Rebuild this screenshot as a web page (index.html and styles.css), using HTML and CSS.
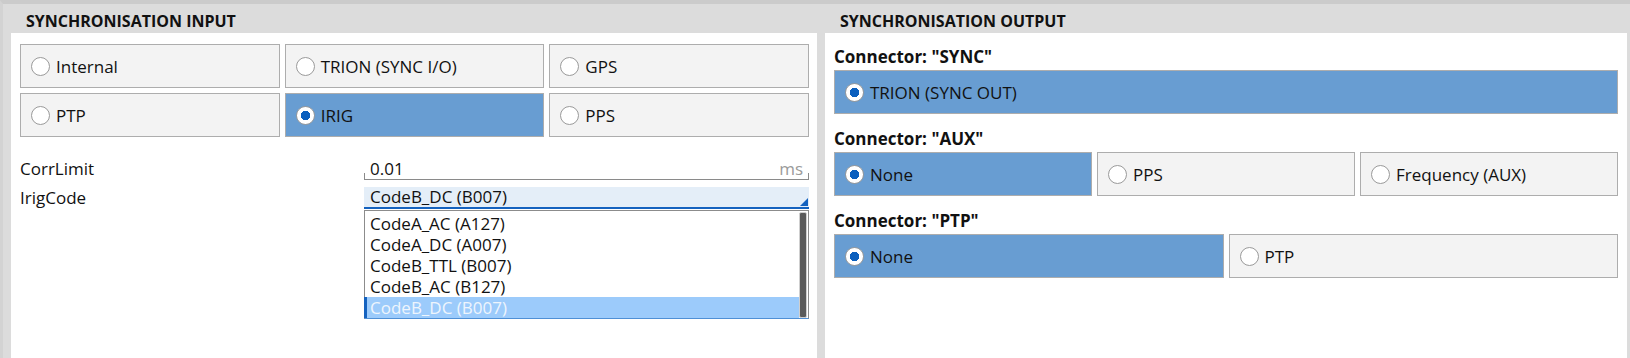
FILE: index.html
```html
<!DOCTYPE html>
<html lang="en">
<head>
  <meta charset="utf-8" />
  <title>Synchronisation</title>
  <link rel="stylesheet" href="styles.css">
</head>
<body>
  <div class="window">
    <section class="group">
      <h2 class="group-title">SYNCHRONISATION INPUT</h2>
      <div class="group-body input-body">
        <div class="choices cols-3">
          <label class="choice"><span class="radio"></span>Internal</label>
          <label class="choice"><span class="radio"></span>TRION (SYNC I/O)</label>
          <label class="choice"><span class="radio"></span>GPS</label>
          <label class="choice"><span class="radio"></span>PTP</label>
          <label class="choice on"><span class="radio"></span>IRIG</label>
          <label class="choice"><span class="radio"></span>PPS</label>
        </div>

        <div class="form">
          <span class="form-label">CorrLimit</span>
          <div class="num-field">
            <span>0.01</span>
            <span class="unit">ms</span>
          </div>

          <span class="form-label">IrigCode</span>
          <div class="combo-wrap">
            <div class="combo">
              <span>CodeB_DC (B007)</span>
              <span class="combo-arrow"></span>
            </div>
            <div class="combo-list">
              <ul>
                <li>CodeA_AC (A127)</li>
                <li>CodeA_DC (A007)</li>
                <li>CodeB_TTL (B007)</li>
                <li>CodeB_AC (B127)</li>
                <li class="current">CodeB_DC (B007)</li>
              </ul>
              <div class="scrollbar"></div>
            </div>
          </div>
        </div>
      </div>
    </section>

    <section class="group">
      <h2 class="group-title">SYNCHRONISATION OUTPUT</h2>
      <div class="group-body output-body">
        <div class="connector">
          <h3 class="connector-title">Connector: "SYNC"</h3>
          <div class="choices cols-1">
            <label class="choice on"><span class="radio"></span>TRION (SYNC OUT)</label>
          </div>
        </div>

        <div class="connector">
          <h3 class="connector-title">Connector: "AUX"</h3>
          <div class="choices cols-3">
            <label class="choice on"><span class="radio"></span>None</label>
            <label class="choice"><span class="radio"></span>PPS</label>
            <label class="choice"><span class="radio"></span>Frequency (AUX)</label>
          </div>
        </div>

        <div class="connector">
          <h3 class="connector-title">Connector: "PTP"</h3>
          <div class="choices cols-2">
            <label class="choice on"><span class="radio"></span>None</label>
            <label class="choice"><span class="radio"></span>PTP</label>
          </div>
        </div>
      </div>
    </section>
  </div>
</body>
</html>
```

FILE: styles.css
```css
* {
  box-sizing: border-box;
}

body {
  margin: 0;
  font-family: 'Open Sans', 'Noto Sans', sans-serif;
  font-size: 17px;
  color: #111;
  background-color: #dcdcdc;
}

.window {
  display: grid;
  grid-template-columns: 806px 802px;
  column-gap: 8px;
  height: 358px;
  padding-left: 8px;
  border-top: 4px solid #cbcbcb;
  border-left: 3px solid #d3d3d3;
}

.group {
  display: flex;
  flex-direction: column;
  min-height: 0;
}

.group-title {
  margin: 0;
  height: 29px;
  padding: 6px 0 0 15px;
  font-size: 16px;
  line-height: 23px;
  font-weight: 700;
}

.group-body {
  flex: 1;
  background-color: #fff;
}

.input-body {
  padding: 11px 8px 0 9px;
}

.output-body {
  padding: 11px 9px 0 9px;
}

/* radio button tiles */
.choices {
  display: grid;
  gap: 5px;
  grid-auto-rows: 44px;
}

.cols-1 { grid-template-columns: 1fr; }
.cols-2 { grid-template-columns: repeat(2, 1fr); }
.cols-3 { grid-template-columns: repeat(3, 1fr); }

.choice {
  display: flex;
  align-items: center;
  gap: 6px;
  padding-left: 10px;
  border: 1px solid #adadad;
  background-color: #f3f3f3;
  white-space: nowrap;
}

.choice.on {
  background-color: #689dd2;
}

.radio {
  flex: none;
  width: 19px;
  height: 19px;
  border-radius: 50%;
  border: 1px solid #9a9a9a;
  background-color: #fff;
}

.choice.on .radio {
  background: radial-gradient(circle, #0b5fbe 0 4.5px, #fff 5px);
}

/* form */
.form {
  display: grid;
  grid-template-columns: 344px 445px;
  row-gap: 7px;
  align-items: start;
  margin-top: 21px;
  line-height: 22px;
}

.num-field {
  display: flex;
  justify-content: space-between;
  height: 22px;
  padding: 0 6px;
  border-bottom: 1px solid #8a8a8a;
  background:
    linear-gradient(#8a8a8a, #8a8a8a) left bottom / 1px 6px no-repeat,
    linear-gradient(#8a8a8a, #8a8a8a) right bottom / 1px 6px no-repeat;
}

.unit {
  color: #9a9a9a;
}

.combo-wrap {
  display: flex;
  flex-direction: column;
  gap: 1px;
}

.combo {
  display: flex;
  justify-content: space-between;
  align-items: flex-end;
  height: 22px;
  padding-left: 6px;
  line-height: 20px;
  background-color: #e4eef8;
  border-bottom: 2px solid #1462bf;
}

.combo-arrow {
  width: 8px;
  height: 8px;
  margin: 0 1px 1px 0;
  background-color: #1462bf;
  clip-path: polygon(100% 0, 100% 100%, 0 100%);
}

.combo-list {
  display: flex;
  height: 109px;
  border: 1px solid #8c8c8c;
  border-bottom-color: #4f90d6;
}

.combo-list ul {
  flex: 1;
  margin: 0;
  padding: 2px 0 0;
  list-style: none;
}

.combo-list li {
  height: 21px;
  padding-left: 5px;
  line-height: 21px;
}

.combo-list li.current {
  margin-left: -1px;
  padding-left: 6px;
  color: #eef5fd;
  background-color: #9ccbfb;
  box-shadow: inset 3px 0 0 #1462bf;
}

.scrollbar {
  width: 8px;
  margin: 1px 1px 0 0;
  border: 1px solid #cfcfcf;
  border-radius: 2px;
  background-color: #5a5a5a;
}

/* output connectors */
.connector + .connector {
  margin-top: 12px;
}

.connector-title {
  margin: 0;
  height: 26px;
  font-size: 17px;
  line-height: 26px;
  font-weight: 700;
}
```
